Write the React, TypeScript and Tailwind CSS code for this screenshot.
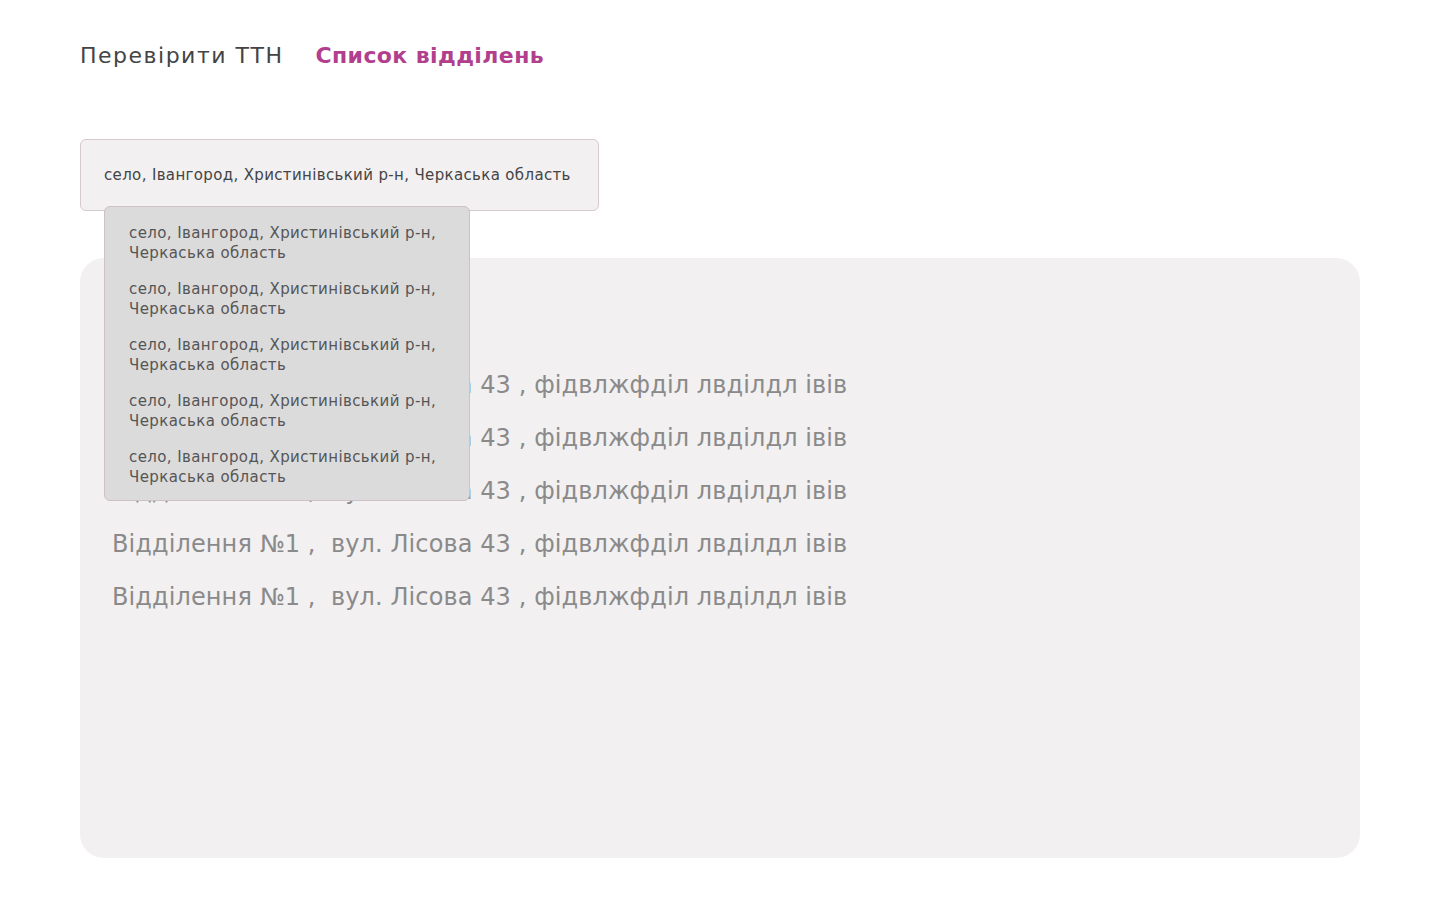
import { useState } from 'react'

const suggestions = Array.from({ length: 5 }, () => 'село, Івангород, Христинівський р-н, Черкаська область')
const branches = Array.from({ length: 5 }, () => 'Відділення №1 ,  вул. Лісова 43 , фідвлжфділ лвділдл івів')

export default function App() {
  const [query] = useState('село, Івангород, Христинівський р-н, Черкаська область')

  return (
    <div className="min-h-[904px] bg-white px-20 pt-[40px] font-['DejaVu_Sans',sans-serif] text-[#444]">
      {/* Tabs */}
      <nav className="flex items-center gap-8 text-[22px] leading-[32px]">
        <span className="tracking-[1.5px] text-[#444]">Перевірити ТТН</span>
        <span className="font-bold tracking-[0.4px] text-[#b13f8d]">Список відділень</span>
      </nav>

      {/* Search */}
      <div className="relative mt-[67px] w-[519px]">
        <div className="flex h-[72px] items-center rounded-md border border-[#d8c9cf] bg-[#f2f0f1] px-[23px] text-[15px] tracking-[0.35px] whitespace-nowrap">
          {query}
        </div>
        <ul className="absolute left-6 top-[67px] z-10 flex w-[366px] flex-col gap-4 rounded-md border border-[#cdc0c6] bg-[#dbdbdb] px-6 pt-4 pb-[13px] text-[15px] leading-[20px] tracking-[0.4px] text-[#555]">
          {suggestions.map((s, i) => (
            <li key={i}>{s}</li>
          ))}
        </ul>
      </div>

      {/* Branches */}
      <div className="mt-[47px] h-[600px] rounded-3xl bg-[#f2f0f1] px-8 pt-[101px]">
        <ul className="flex flex-col text-[24px] leading-[53px] tracking-[0.1px] text-[#8a8a8a]">
          {branches.map((b, i) => (
            <li key={i} className="whitespace-pre">{b}</li>
          ))}
        </ul>
      </div>
    </div>
  )
}
